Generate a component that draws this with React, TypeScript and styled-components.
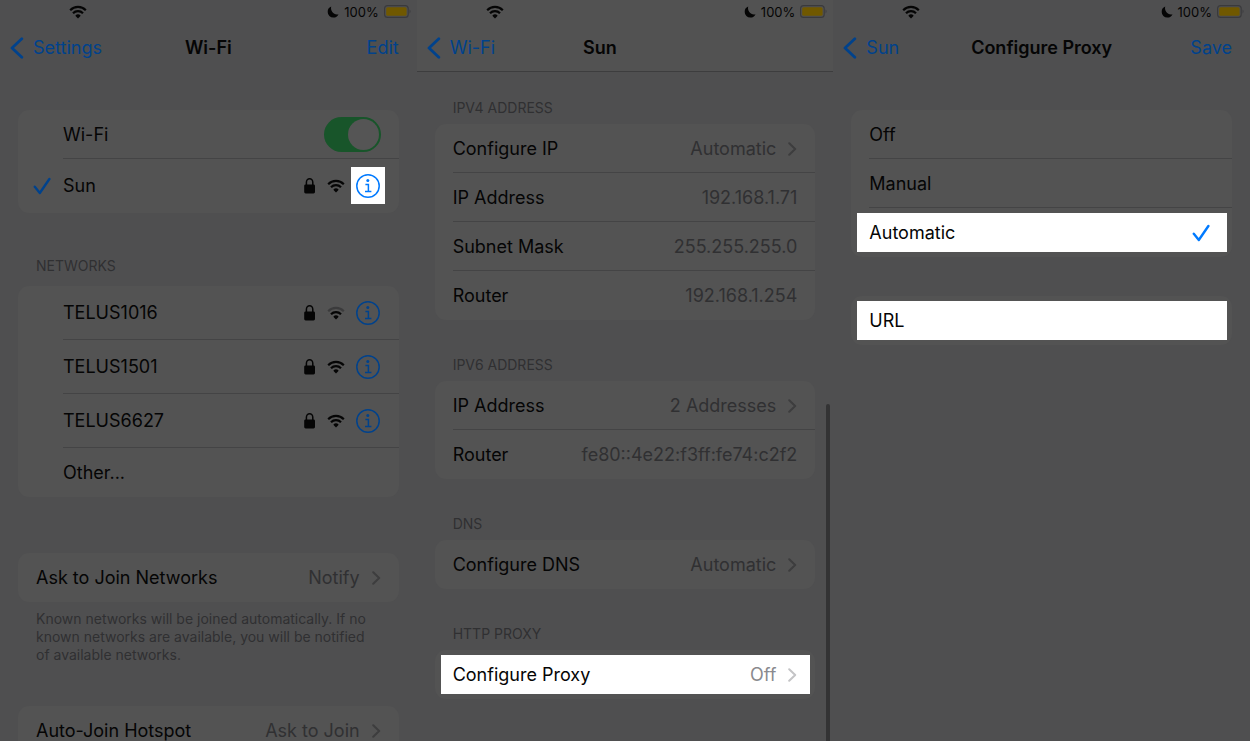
import React from "react";
import styled, { createGlobalStyle, css } from "styled-components";

const GlobalStyle = createGlobalStyle`
  *, *::before, *::after { box-sizing: border-box; }
  body {
    margin: 0;
    background: #4f4f50;
    color: #050505;
    font-family: Inter, "Liberation Sans", sans-serif;
    font-size: 18px;
    line-height: 24px;
  }
  button, input { font: inherit; color: inherit; border: 0; padding: 0; margin: 0; background: none; }
  button { cursor: pointer; }
`;

const blue = "#00428c";
const brightBlue = "#007aff";

const Gallery = styled.main`
  display: grid;
  grid-template-columns: repeat(3, minmax(0, 1fr));
  height: 100vh;
  overflow: hidden;
`;

const Screen = styled.section`
  position: relative;
  min-width: 0;
`;

const Top = styled.header<{ $raised?: boolean }>`
  height: 72px;
  border-bottom: 1px solid ${(p) => (p.$raised ? "#3d3d3e" : "transparent")};
  background: ${(p) => (p.$raised ? "#525252" : "transparent")};
`;

const StatusBar = styled.div`
  display: flex;
  align-items: center;
  justify-content: space-between;
  height: 23px;
  padding: 0 6px 0 69px;
  font-size: 13px;
  line-height: 16px;
`;

const StatusGroup = styled.div`
  display: flex;
  align-items: center;
  gap: 5px;
`;

const NavBar = styled.nav<{ $wideEnd?: boolean }>`
  display: grid;
  grid-template-columns: 1fr auto 1fr;
  align-items: center;
  height: 49px;
  padding: 0 ${(p) => (p.$wideEnd ? 60 : 10)}px 0 10px;
`;

const Title = styled.h1`
  grid-column: 2;
  margin: 0;
  font-size: 18px;
  font-weight: 600;
  line-height: 24px;
`;

const BackLink = styled.a`
  display: flex;
  align-items: center;
  gap: 9px;
  color: ${blue};
  text-decoration: none;
`;

const NavAction = styled.button`
  justify-self: end;
  margin-right: 8px;
  color: ${blue};
`;

const Content = styled.div<{ $start: number }>`
  padding: ${(p) => p.$start}px 18px 0;
`;

const Group = styled.section<{ $gap?: number }>`
  margin-top: ${(p) => p.$gap ?? 0}px;
`;

const GroupTitle = styled.h2<{ $loose?: boolean }>`
  margin: 0;
  padding: 0 18px ${(p) => (p.$loose ? 11 : 7)}px;
  color: #303032;
  font-size: 14px;
  font-weight: 400;
  line-height: 18px;
`;

const Footnote = styled.p`
  margin: 0;
  padding: 8px 18px 0;
  color: #303032;
  font-size: 14px;
  line-height: 18px;
`;

const Card = styled.div`
  border-radius: 11px;
  background: #535353;
  & > :not(:last-child) > :last-child { box-shadow: inset 0 -1px #444445; }
`;

const spotlight = css`
  position: relative;
  isolation: isolate;
  &::before {
    content: "";
    position: absolute;
    z-index: -1;
    inset: 5px 5px 5px 6px;
    background: #fff;
  }
`;

const Row = styled.div<{ $tall?: boolean; $lit?: boolean; $inset?: boolean }>`
  display: flex;
  align-items: stretch;
  width: 100%;
  height: ${(p) => (p.$tall ? 54 : 49)}px;
  padding-left: ${(p) => (p.$inset ? 0 : 18)}px;
  text-align: left;
  ${(p) => p.$lit && spotlight}
`;

const Lead = styled.span`
  display: flex;
  flex: 0 0 45px;
  align-items: center;
  padding-left: 15px;
  color: ${blue};
`;

const RowBody = styled.div`
  display: flex;
  flex: 1;
  min-width: 0;
  align-items: center;
  justify-content: space-between;
  gap: 12px;
  padding-right: 18px;
`;

const RowButton = styled(RowBody).attrs({ as: "button" })`
  text-align: left;
`;

const RowLabel = styled(RowBody).attrs({ as: "label" })``;

const Name = styled.span`
  white-space: nowrap;
`;

const Value = styled.span<{ $lit?: boolean }>`
  display: flex;
  align-items: center;
  gap: 11px;
  color: ${(p) => (p.$lit ? "#8a8a8e" : "#303032")};
  white-space: nowrap;
`;

const Accessories = styled.span`
  display: flex;
  align-items: center;
  gap: 11px;
  padding-right: 1px;
`;

const InfoButton = styled.button<{ $lit?: boolean }>`
  display: flex;
  color: ${(p) => (p.$lit ? brightBlue : blue)};
  ${(p) => p.$lit && spotlight}
  &::before { inset: -7px -5px -6px; }
`;

const Switch = styled.input`
  position: relative;
  width: 57px;
  height: 35px;
  border-radius: 18px;
  appearance: none;
  background: #18552a;
  cursor: pointer;
  &::after {
    content: "";
    position: absolute;
    top: 2px;
    right: 2px;
    width: 31px;
    height: 31px;
    border-radius: 50%;
    background: #555;
  }
  &:not(:checked) { background: #444; }
  &:not(:checked)::after { right: 24px; }
`;

const HiddenRadio = styled.input`
  appearance: none;
  width: 0;
  height: 0;
`;

const Tick = styled.span`
  display: none;
  padding-right: 4px;
  color: ${brightBlue};
  input:checked + & { display: flex; }
`;

const Choice = styled.span`
  display: flex;
  align-items: center;
`;

const UrlInput = styled.input`
  flex: 1;
  min-width: 0;
  outline: 0;
`;

const ScrollThumb = styled.div`
  position: absolute;
  top: 404px;
  right: 3px;
  bottom: 3px;
  width: 4px;
  border-radius: 2px;
  background: #333334;
`;

const WifiIcon = ({ weak }: { weak?: boolean }) => (
  <svg width="18" height="14" viewBox="0 0 18 14" fill="none" stroke="currentColor" strokeWidth="2.2" aria-hidden="true">
    <path d="M1.2 5.2a11 11 0 0 1 15.6 0" stroke={weak ? "#3b3b3c" : "currentColor"} />
    <path d="M4 8.2a7 7 0 0 1 10 0" />
    <path d="M6.3 10.7a3.8 3.8 0 0 1 5.4 0L9 13.4Z" fill="currentColor" stroke="none" />
  </svg>
);

const LockIcon = () => (
  <svg width="12" height="16" viewBox="0 0 12 16" aria-hidden="true">
    <rect x="0.2" y="6.4" width="10.8" height="9" rx="1.4" fill="currentColor" />
    <path d="M2.4 7.3V4.4a3.2 3.6 0 0 1 6.4 0v2.9" fill="none" stroke="currentColor" strokeWidth="1.5" />
  </svg>
);

const InfoIcon = () => (
  <svg width="24" height="24" viewBox="0 0 24 24" fill="none" stroke="currentColor" aria-hidden="true">
    <circle cx="12" cy="12" r="11.2" strokeWidth="1.5" />
    <circle cx="11.8" cy="6.4" r="1.5" fill="currentColor" stroke="none" />
    <path d="M9.4 10.4h3v7M9 17.4h6.4" strokeWidth="1.5" />
  </svg>
);

const CheckIcon = () => (
  <svg width="18" height="18" viewBox="0 0 18 18" fill="none" stroke="currentColor" strokeWidth="2.4" strokeLinecap="round" strokeLinejoin="round" aria-hidden="true">
    <path d="M1.8 9.8 6.8 16 16.4 2" />
  </svg>
);

const ChevronIcon = ({ lit }: { lit?: boolean }) => (
  <svg width="10" height="14" viewBox="0 0 10 14" fill="none" stroke={lit ? "#c4c4c6" : "#3d3d3e"} strokeWidth="2" strokeLinecap="round" strokeLinejoin="round" aria-hidden="true">
    <path d="m2.2 1.2 6 5.8-6 5.8" />
  </svg>
);

const BackIcon = () => (
  <svg width="14" height="22" viewBox="0 0 14 22" fill="none" stroke="currentColor" strokeWidth="2.8" strokeLinecap="round" strokeLinejoin="round" aria-hidden="true">
    <path d="M11.8 1.8 2 11l9.8 9.2" />
  </svg>
);

const MoonIcon = () => (
  <svg width="12" height="12" viewBox="0 0 12 12" fill="currentColor" aria-hidden="true">
    <path d="M4.2.6A5.7 5.7 0 0 0 .7 6 5.6 5.6 0 0 0 6.4 11.6 5.7 5.7 0 0 0 11.5 8.2C7.4 9.4 3 5.5 4.2.6Z" />
  </svg>
);

const BatteryIcon = () => (
  <svg width="27" height="13" viewBox="0 0 27 13" aria-hidden="true">
    <rect x="0.6" y="0.6" width="23.6" height="11.8" rx="3" fill="none" stroke="#3a3a3c" strokeWidth="1.1" />
    <rect x="2.2" y="2.2" width="20.4" height="8.6" rx="1.6" fill="#705800" />
    <path d="M25.6 4.6c1.2.6 1.2 3.2 0 3.8Z" fill="#3a3a3c" />
  </svg>
);

interface ScreenTopProps {
  back: string;
  title: string;
  action?: string;
  raised?: boolean;
}

const ScreenTop = ({ back, title, action, raised }: ScreenTopProps) => (
  <Top $raised={raised}>
    <StatusBar>
      <WifiIcon />
      <StatusGroup>
        <MoonIcon />
        <span>100%</span>
        <BatteryIcon />
      </StatusGroup>
    </StatusBar>
    <NavBar $wideEnd={!action}>
      <BackLink href="#back">
        <BackIcon />
        {back}
      </BackLink>
      <Title>{title}</Title>
      {action && <NavAction type="button">{action}</NavAction>}
    </NavBar>
  </Top>
);

interface NetworkRowProps {
  name: string;
  joined?: boolean;
  weak?: boolean;
}

const NetworkRow = ({ name, joined, weak }: NetworkRowProps) => (
  <Row $tall $inset>
    <Lead>{joined && <CheckIcon />}</Lead>
    <RowBody>
      <Name>{name}</Name>
      <Accessories>
        <LockIcon />
        <WifiIcon weak={weak} />
        <InfoButton type="button" $lit={joined} aria-label={`${name} details`}>
          <InfoIcon />
        </InfoButton>
      </Accessories>
    </RowBody>
  </Row>
);

interface DetailRowProps {
  name: string;
  value: string;
  link?: boolean;
  lit?: boolean;
}

const DetailRow = ({ name, value, link, lit }: DetailRowProps) => {
  const Body = link ? RowButton : RowBody;
  return (
    <Row $lit={lit}>
      <Body>
        <Name>{name}</Name>
        <Value $lit={lit}>
          {value}
          {link && <ChevronIcon lit={lit} />}
        </Value>
      </Body>
    </Row>
  );
};

const WifiScreen = () => (
  <Screen>
    <ScreenTop back="Settings" title="Wi-Fi" action="Edit" />
    <Content $start={38}>
      <Card>
        <Row $inset>
          <Lead />
          <RowLabel>
            <Name>Wi-Fi</Name>
            <Switch type="checkbox" defaultChecked />
          </RowLabel>
        </Row>
        <NetworkRow name="Sun" joined />
      </Card>
      <Group $gap={44}>
        <GroupTitle $loose>NETWORKS</GroupTitle>
        <Card>
          <NetworkRow name="TELUS1016" weak />
          <NetworkRow name="TELUS1501" />
          <NetworkRow name="TELUS6627" />
          <Row $inset>
            <Lead />
            <RowButton>
              <Name>Other...</Name>
            </RowButton>
          </Row>
        </Card>
      </Group>
      <Group $gap={56}>
        <Card>
          <DetailRow name="Ask to Join Networks" value="Notify" link />
        </Card>
        <Footnote>
          Known networks will be joined automatically. If no known networks are available, you will be notified of
          available networks.
        </Footnote>
      </Group>
      <Group $gap={42}>
        <Card>
          <DetailRow name="Auto-Join Hotspot" value="Ask to Join" link />
        </Card>
      </Group>
    </Content>
  </Screen>
);

const NetworkScreen = () => (
  <Screen>
    <ScreenTop back="Wi-Fi" title="Sun" raised />
    <Content $start={27}>
      <Group>
        <GroupTitle>IPV4 ADDRESS</GroupTitle>
        <Card>
          <DetailRow name="Configure IP" value="Automatic" link />
          <DetailRow name="IP Address" value="192.168.1.71" />
          <DetailRow name="Subnet Mask" value="255.255.255.0" />
          <DetailRow name="Router" value="192.168.1.254" />
        </Card>
      </Group>
      <Group $gap={36}>
        <GroupTitle>IPV6 ADDRESS</GroupTitle>
        <Card>
          <DetailRow name="IP Address" value="2 Addresses" link />
          <DetailRow name="Router" value="fe80::4e22:f3ff:fe74:c2f2" />
        </Card>
      </Group>
      <Group $gap={36}>
        <GroupTitle>DNS</GroupTitle>
        <Card>
          <DetailRow name="Configure DNS" value="Automatic" link />
        </Card>
      </Group>
      <Group $gap={36}>
        <GroupTitle>HTTP PROXY</GroupTitle>
        <Card>
          <DetailRow name="Configure Proxy" value="Off" link lit />
        </Card>
      </Group>
    </Content>
    <ScrollThumb />
  </Screen>
);

const modes = ["Off", "Manual", "Automatic"];

const ProxyScreen = () => (
  <Screen>
    <ScreenTop back="Sun" title="Configure Proxy" action="Save" />
    <Content $start={38}>
      <Card>
        {modes.map((mode) => (
          <Row key={mode} $lit={mode === "Automatic"}>
            <RowLabel>
              <Name>{mode}</Name>
              <Choice>
                <HiddenRadio type="radio" name="proxy" defaultChecked={mode === "Automatic"} />
                <Tick>
                  <CheckIcon />
                </Tick>
              </Choice>
            </RowLabel>
          </Row>
        ))}
      </Card>
      <Group $gap={39}>
        <Card>
          <Row $lit>
            <RowLabel>
              <Name>URL</Name>
              <UrlInput type="text" />
            </RowLabel>
          </Row>
        </Card>
      </Group>
    </Content>
  </Screen>
);

const App = () => (
  <>
    <GlobalStyle />
    <Gallery>
      <WifiScreen />
      <NetworkScreen />
      <ProxyScreen />
    </Gallery>
  </>
);

export default App;
